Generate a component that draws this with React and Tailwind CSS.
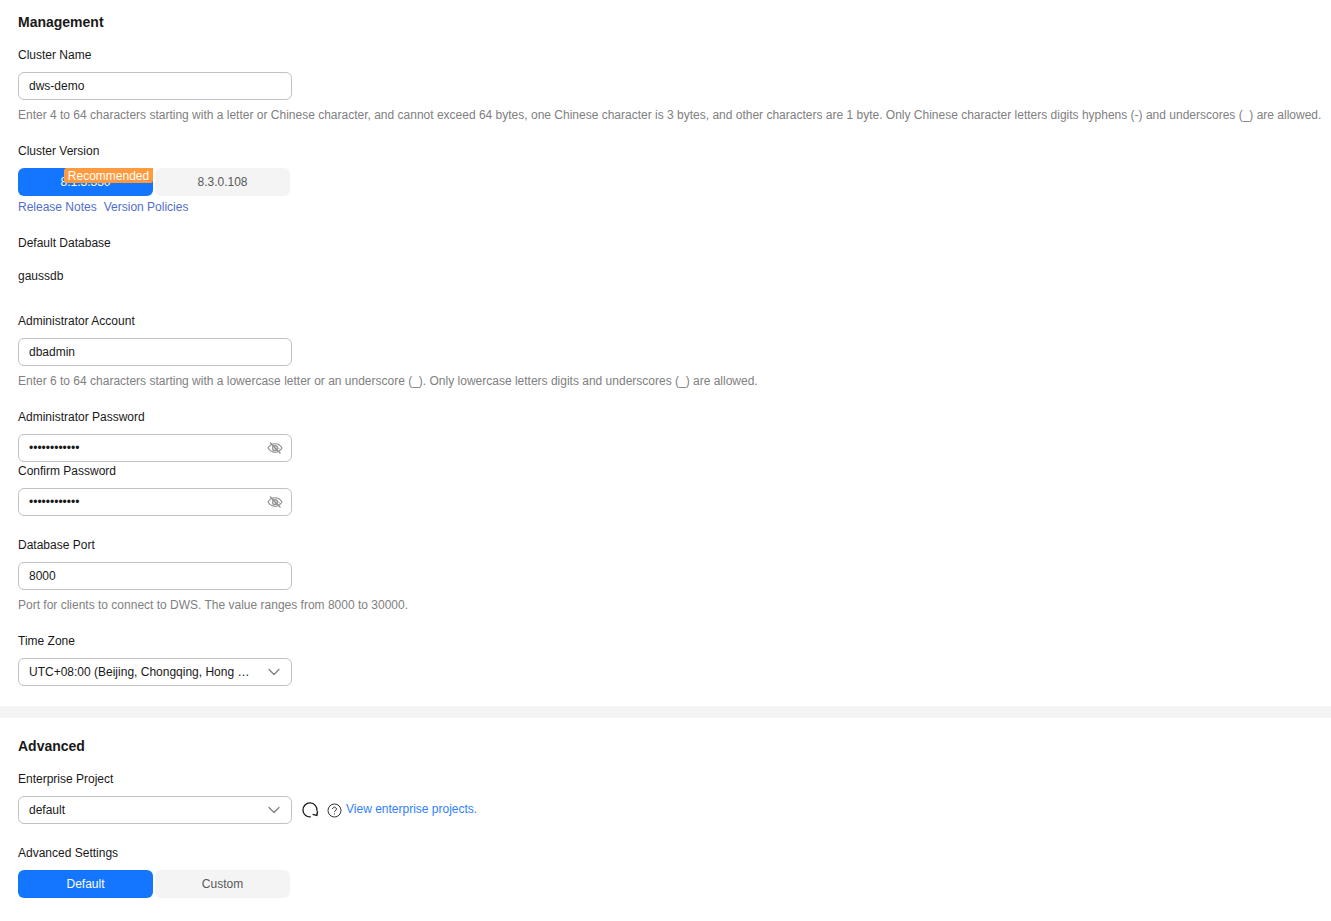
import { ChevronDown } from "lucide-react";

function Label({ children, className = "" }) {
  return <div className={"h-[18px] leading-[18px] text-xs text-[#191919] " + className}>{children}</div>;
}

function Hint({ children }) {
  return <div className="mt-[6px] h-[18px] leading-[18px] text-xs text-[#808080] whitespace-nowrap">{children}</div>;
}

function TextInput({ value, type = "text", children }) {
  return (
    <div className="mt-2 w-[274px] h-7 flex items-center border border-[#c2c2c2] rounded-md pl-[10px] pr-2 bg-white">
      <input
        readOnly
        type={type}
        value={value}
        className="flex-1 min-w-0 outline-none text-xs text-[#191919] bg-transparent"
      />
      {children}
    </div>
  );
}

function EyeOffIcon() {
  return (
    <svg width="16" height="16" viewBox="0 0 16 16" fill="none" stroke="#8c8c8c" strokeWidth="1.100" className="shrink-0">
      <path d="M1 8C2.600 5.400 5.100 3.800 8 3.800s5.400 1.600 7 4.200c-1.600 2.600-4.100 4.200-7 4.200S2.600 10.600 1 8Z" />
      <circle cx="8" cy="8" r="2.400" />
      <path d="M3 2.500 13.500 13.500" />
      <path d="M5.200 9.800 7.500 12M7 7.500l4.200 4.200M9.500 6.200l3.500 3.500" strokeWidth="0.800" />
    </svg>
  );
}

function Select({ children }) {
  return (
    <div className="w-[274px] h-7 flex items-center border border-[#c2c2c2] rounded-md pl-[10px] pr-[7px] bg-white shrink-0">
      <div className="w-[222px] truncate text-xs text-[#191919]">{children}</div>
      <ChevronDown size={20} strokeWidth={1.500} color="#808080" className="ml-auto shrink-0" />
    </div>
  );
}

function SegButton({ active, children }) {
  return (
    <div
      className={
        "w-[135px] h-7 flex items-center justify-center rounded-md text-xs " +
        (active ? "bg-[#1476ff] text-white" : "bg-[#f4f4f4] text-[#595959]")
      }
    >
      {children}
    </div>
  );
}

function RefreshIcon() {
  return (
    <svg width="18" height="18" viewBox="0 0 18 18" fill="none" stroke="#191919" strokeWidth="1.300" className="shrink-0">
      <path d="M9.800 15.900A7 7 0 1 1 15.900 9.800" />
      <path d="M11.600 13.400l4.300 1.100.6-4.300" strokeWidth="1.400" />
    </svg>
  );
}

function HelpIcon() {
  return (
    <svg width="15" height="15" viewBox="0 0 15 15" fill="none" stroke="#333333" strokeWidth="1" className="shrink-0">
      <circle cx="7.500" cy="7.500" r="6.500" />
      <path d="M5.600 6a1.900 1.900 0 1 1 2.900 1.600c-.7.400-1 .8-1 1.500" />
      <path d="M7.500 10.400v1.100" />
    </svg>
  );
}

export default function App() {
  return (
    <div className="w-[1331px] h-[921px] overflow-hidden bg-white [font-family:'Liberation_Sans',Arial,sans-serif]">
      <section className="pl-[18px] pt-[13px] pb-5">
        <h2 className="h-[18px] leading-[18px] text-sm font-bold text-[#191919]">Management</h2>

        <Label className="mt-[15px]">Cluster Name</Label>
        <TextInput value="dws-demo" />
        <Hint>
          Enter 4 to 64 characters starting with a letter or Chinese character, and cannot exceed 64 bytes, one Chinese
          character is 3 bytes, and other characters are 1 byte. Only Chinese character letters digits hyphens (-) and
          underscores (_) are allowed.
        </Hint>

        <Label className="mt-[18px]">Cluster Version</Label>
        <div className="mt-2 flex gap-[2px]">
          <div className="relative">
            <SegButton active>8.1.3.330</SegButton>
            <span className="absolute top-0 right-0 w-[89px] h-[15px] leading-[17px] text-center bg-[#ff9a3e] text-white text-xs rounded-[3px] rounded-tr-none">
              Recommended
            </span>
          </div>
          <SegButton>8.3.0.108</SegButton>
        </div>
        <div className="mt-[2px] h-[18px] leading-[18px] text-xs text-[#526ecc] flex gap-[7px]">
          <a>Release Notes</a>
          <a>Version Policies</a>
        </div>

        <Label className="mt-[18px]">Default Database</Label>
        <div className="mt-[15px] h-[18px] leading-[18px] text-xs text-[#191919]">gaussdb</div>

        <Label className="mt-[27px]">Administrator Account</Label>
        <TextInput value="dbadmin" />
        <Hint>
          Enter 6 to 64 characters starting with a lowercase letter or an underscore (_). Only lowercase letters digits
          and underscores (_) are allowed.
        </Hint>

        <Label className="mt-[18px]">Administrator Password</Label>
        <TextInput type="password" value="Password@123">
          <EyeOffIcon />
        </TextInput>
        <Label>Confirm Password</Label>
        <TextInput type="password" value="Password@123">
          <EyeOffIcon />
        </TextInput>

        <Label className="mt-5">Database Port</Label>
        <TextInput value="8000" />
        <Hint>Port for clients to connect to DWS. The value ranges from 8000 to 30000.</Hint>

        <Label className="mt-[18px]">Time Zone</Label>
        <div className="mt-2">
          <Select>UTC+08:00 (Beijing, Chongqing, Hong Kong, Urumqi)</Select>
        </div>
      </section>

      <div className="h-3 bg-[#f4f4f4]" />

      <section className="pl-[18px] pt-[19px]">
        <h2 className="h-[18px] leading-[18px] text-sm font-bold text-[#191919]">Advanced</h2>

        <Label className="mt-[15px]">Enterprise Project</Label>
        <div className="mt-2 flex items-center">
          <Select>default</Select>
          <div className="ml-[9px]">
            <RefreshIcon />
          </div>
          <div className="ml-[8px] mt-[1px]">
            <HelpIcon />
          </div>
          <a className="ml-[4px] -mt-[2px] text-xs text-[#2f7fff]">View enterprise projects.</a>
        </div>

        <Label className="mt-5">Advanced Settings</Label>
        <div className="mt-2 flex gap-[2px]">
          <SegButton active>Default</SegButton>
          <SegButton>Custom</SegButton>
        </div>
      </section>
    </div>
  );
}
